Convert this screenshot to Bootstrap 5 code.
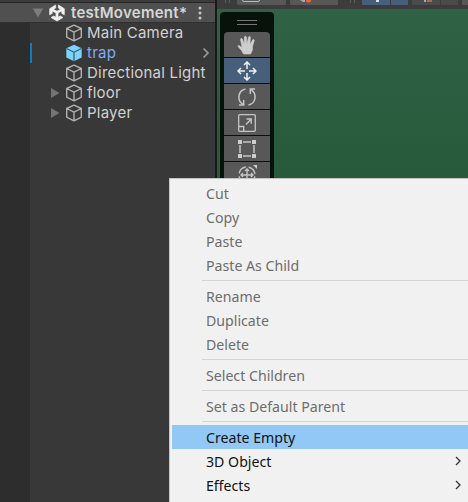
<!DOCTYPE html>
<html lang="en">
<head>
<meta charset="utf-8">
<meta name="viewport" content="width=device-width, initial-scale=1">
<title>testMovement</title>
<link href="https://cdn.jsdelivr.net/npm/bootstrap@5.3.0/dist/css/bootstrap.min.css" rel="stylesheet">
<style>
body { width: 468px; height: 502px; background: #383838; }
svg { display: block; flex: none; }
.editor { height: 502px; }
.hierarchy { width: 215px; font: 15px/20px Inter, sans-serif; color: #d2d2d2; letter-spacing: .22px; }
.top-strip { height: 3px; background: #3c3c3c; border-bottom: 1px solid #252525; }
.scene-head { height: 20px; background: #505050; border-bottom: 1px solid #303030; padding: 0 13px 0 32px; font-weight: 600; letter-spacing: .28px; color: #d6d6d6; }
.scene-title { margin-left: 5px; }
.gutter { width: 30px; background: #2d2d2d; }
.tree-row { height: 20px; padding-left: 20px; }
.fold { width: 15px; }
.tree-row .cube { margin-right: 4px; }
.prefab { border-left: 2px solid #0f7dbd; padding: 0 5px 0 18px; color: #7fadf3; }
.divide { width: 2px; background: #191919; }
.scene { background: linear-gradient(#306245, #275a3b 180px); }
.tool-strip { height: 9px; background: #3c3c3c; }
.palette { width: 54px; height: 200px; margin: 3px 0 0 3px; padding: 8px 4px 0; background: #07120b; border-radius: 4px 4px 0 0; }
.grip { width: 20px; height: 5px; margin: 0 auto 7px 13px; border: solid #777; border-width: 1px 0; }
.tool { width: 46px; height: 25px; margin-bottom: 1px; background: #585858; }
.tool:nth-child(2) { border-radius: 4px 4px 0 0; }
.tool-on { background: #46607c; }
.ctx { left: 169px; top: 178px; width: 300px; height: 326px; padding: 2px 0 0 2px; background: #f1f1f1; border: 1px solid #c4c4c4; color: #6d6d6d; font: 15px/22px "Noto Sans", sans-serif; }
.ctx-item { height: 24px; padding: 1px 7px 1px 34px; white-space: nowrap; }
.ctx-item span { display: inline-block; transform-origin: left; transform: scaleX(.943); }
.ctx-live { color: #111; }
.ctx-hot { background: #91c8f6; }
.ctx-rule { height: 7px; padding: 3px 0; margin-left: 30px; }
.ctx-rule::before { content: ""; display: block; height: 1px; background: #d5d5d5; }
</style>
<script src="https://cdn.jsdelivr.net/npm/bootstrap@5.3.0/dist/js/bootstrap.bundle.min.js"></script>
</head>
<body class="overflow-hidden position-relative">
<svg width="0" height="0" class="position-absolute">
  <symbol id="cube" viewBox="0 0 18 18"><path d="M9 1.2 16.3 4.5V13.2L9 16.8 1.7 13.2V4.5ZM1.7 4.5 9 8.2 16.3 4.5M9 8.2V16.8" fill="none" stroke="#b0b0b0" stroke-width="1.4" stroke-linejoin="round"/></symbol>
  <symbol id="fold" viewBox="0 0 10 12"><path d="M1 1 9.5 6 1 11Z" fill="#747474"/></symbol>
</svg>
<div class="editor d-flex">
  <div class="hierarchy d-flex flex-column flex-shrink-0">
    <div class="top-strip"></div>
    <div class="scene-head d-flex align-items-center">
      <svg width="12" height="12" viewBox="0 0 12 12"><path d="M.8 1.500H11.2L6 10.5Z" fill="#7d7d7d"/></svg>
      <svg width="18" height="18" viewBox="0 0 18 18" class="ms-1">
        <path d="M7.600 1V4L5.500 5.300 9 7.300 12.500 5.300 10.400 4V1L16.300 4.700V10.800L13.800 9.400V6.900L10 9V13.300L12.300 12 14.900 13.500 9 17 3.100 13.500 5.700 12 8 13.300V9L4.200 6.900V9.400L1.700 10.800V4.700Z" fill="#f0f0f0" stroke="#f0f0f0" stroke-width=".7"/>
      </svg>
      <span class="scene-title">testMovement*</span>
      <svg width="4" height="14" viewBox="0 0 4 14" class="ms-auto"><g fill="#c8c8c8"><circle cx="2" cy="2" r="1.5"/><circle cx="2" cy="7" r="1.5"/><circle cx="2" cy="12" r="1.5"/></g></svg>
    </div>
    <div class="d-flex flex-grow-1">
      <div class="gutter"></div>
      <div class="flex-grow-1">
        <div class="tree-row d-flex align-items-center"><span class="fold"></span><svg class="cube" width="18" height="18"><use href="#cube"/></svg><span>Main Camera</span></div>
        <div class="tree-row prefab d-flex align-items-center"><span class="fold"></span><svg class="cube" width="18" height="18" viewBox="0 0 18 18"><path d="M9 .8 16.7 4.2V13.4L9 17.2 1.3 13.4V4.2Z" fill="#7dd3fa"/><path d="M1.5 4.5 9 8.2 16.5 4.5M9 8.2V17" fill="none" stroke="#315a70" stroke-width="1.2"/></svg><span>trap</span><svg width="8" height="12" viewBox="0 0 8 12" class="ms-auto"><path d="M1.5 1.5 6 6 1.5 10.5" fill="none" stroke="#999" stroke-width="1.7"/></svg></div>
        <div class="tree-row d-flex align-items-center"><span class="fold"></span><svg class="cube" width="18" height="18"><use href="#cube"/></svg><span class="text-nowrap">Directional Light</span></div>
        <div class="tree-row d-flex align-items-center"><span class="fold"><svg width="10" height="12"><use href="#fold"/></svg></span><svg class="cube" width="18" height="18"><use href="#cube"/></svg><span>floor</span></div>
        <div class="tree-row d-flex align-items-center"><span class="fold"><svg width="10" height="12"><use href="#fold"/></svg></span><svg class="cube" width="18" height="18"><use href="#cube"/></svg><span>Player</span></div>
      </div>
    </div>
  </div>
  <div class="divide flex-shrink-0"></div>
  <div class="scene flex-grow-1">
    <div class="tool-strip">
      <svg width="251" height="9" viewBox="0 0 251 9">
        <path d="M8.5 0V3M12.5 0V3M133.5 0V3M137.5 0V3" stroke="#5c5c5c"/>
        <path d="M20 0H69V3.5Q69 5 67.5 5H21.5Q20 5 20 3.5ZM73 0H121V5H74.5Q73 5 73 3.5ZM245 0H251V5H246Q245 5 245 4Z" fill="#585858"/>
        <path d="M145 0H173V5H146Q145 5 145 4ZM174 0H191V4Q191 5 190 5H174Z" fill="#46607c"/>
        <path d="M195 0H223V5H195ZM224 0H241V5H224Z" fill="#4b4b4b"/>
        <path d="M25.5 0Q25.5 1.5 27 1.5H41Q42.500 1.5 42.5 0" fill="none" stroke="#bbb"/>
        <path d="M83 0H88V2H86Z" fill="#aaa"/><circle cx="91.5" cy="0" r="2.5" fill="#ed6440"/>
        <path d="M159 0H162V2H159Z" fill="#ddd"/><path d="M207 0H209V2H207Z" fill="#aaa"/><path d="M210 0H215V2H210Z" fill="#b7644c"/>
      </svg>
    </div>
    <div class="palette">
      <div class="grip"></div>
      <div class="tool d-flex align-items-center justify-content-center"><svg width="20" height="20" viewBox="0 0 20 20"><path d="M6.500 19 4.600 15.600 1.200 11.700Q.7 10.500 2 10.400L5.200 12.500 3.500 4.600Q3.500 3.100 4.800 3.500L5.500 4.300 7.500 9.500 7.400 2Q8.300.2 9.400 2L10 9.300 11.600 2Q12.600.5 13.400 2.100L12.900 9.800 15.700 4.800Q17.100 3.800 17.300 5.400L15.500 11.500 15.300 15.300 13.600 19Z" fill="#cecece" stroke="#cecece" stroke-width=".6"/></svg></div>
      <div class="tool tool-on d-flex align-items-center justify-content-center"><svg width="20" height="20" viewBox="0 0 20 20"><path d="M10 8V1M7 4 10 1 13 4M10 12V19M7 16 10 19 13 16M8 10H1M4 7 1 10 4 13M12 10H19M16 7 19 10 16 13" fill="none" stroke="#f0f0f0" stroke-width="1.5"/></svg></div>
      <div class="tool d-flex align-items-center justify-content-center"><svg width="20" height="20" viewBox="0 0 20 20"><path d="M8.5 2.1A8.2 8.2 0 0 0 5.600 17M2 18H6.700V13M11.5 18A8.2 8.2 0 0 0 14.5 3.2M18 2H13.3V7" fill="none" stroke="#c4c4c4" stroke-width="1.5"/></svg></div>
      <div class="tool d-flex align-items-center justify-content-center"><svg width="20" height="20" viewBox="0 0 20 20"><rect x="1.7" y="1.7" width="16.6" height="16.6" rx="1" fill="none" stroke="#c4c4c4" stroke-width="1.3"/><path d="M2 13.5H6.700V18M9 11.5 14 6.2M9.5 6H14.2V10.8" fill="none" stroke="#c4c4c4" stroke-width="1.4"/></svg></div>
      <div class="tool d-flex align-items-center justify-content-center"><svg width="20" height="20" viewBox="0 0 20 20"><path d="M1 1H5V5H1ZM15 1H19V5H15ZM1 15H5V19H1ZM15 15H19V19H15Z" fill="#ccc"/><path d="M6 3H14M6 17H14M3 6V14M17 6V14" stroke="#c4c4c4" stroke-width="1.5"/></svg></div>
      <div class="tool d-flex align-items-center justify-content-center"><svg width="20" height="20" viewBox="0 0 20 20"><circle cx="10" cy="10" r="8" fill="none" stroke="#c4c4c4" stroke-width="1.5" stroke-dasharray="9.56 3" stroke-dashoffset="-1.5"/><path d="M10 4V16M4 10H16M8 6 10 4 12 6M6 8 4 10 6 12M14 8 16 10 14 12" fill="none" stroke="#c4c4c4" stroke-width="1.4"/><path d="M16 0H20V4Z" fill="#ccc"/></svg></div>
    </div>
  </div>
</div>
<div class="ctx position-absolute">
  <div class="ctx-item"><span>Cut</span></div>
  <div class="ctx-item"><span>Copy</span></div>
  <div class="ctx-item"><span>Paste</span></div>
  <div class="ctx-item"><span>Paste As Child</span></div>
  <div class="ctx-rule"></div>
  <div class="ctx-item"><span>Rename</span></div>
  <div class="ctx-item"><span>Duplicate</span></div>
  <div class="ctx-item"><span>Delete</span></div>
  <div class="ctx-rule"></div>
  <div class="ctx-item"><span>Select Children</span></div>
  <div class="ctx-rule"></div>
  <div class="ctx-item"><span>Set as Default Parent</span></div>
  <div class="ctx-rule"></div>
  <div class="ctx-item ctx-live ctx-hot"><span>Create Empty</span></div>
  <div class="ctx-item ctx-live d-flex align-items-center justify-content-between"><span>3D Object</span><svg width="6" height="10" viewBox="0 0 6 10"><path d="M1 1 5 5 1 9" fill="none" stroke="#333" stroke-width="1.3"/></svg></div>
  <div class="ctx-item ctx-live d-flex align-items-center justify-content-between"><span>Effects</span><svg width="6" height="10" viewBox="0 0 6 10"><path d="M1 1 5 5 1 9" fill="none" stroke="#333" stroke-width="1.3"/></svg></div>
</div>
</body>
</html>
